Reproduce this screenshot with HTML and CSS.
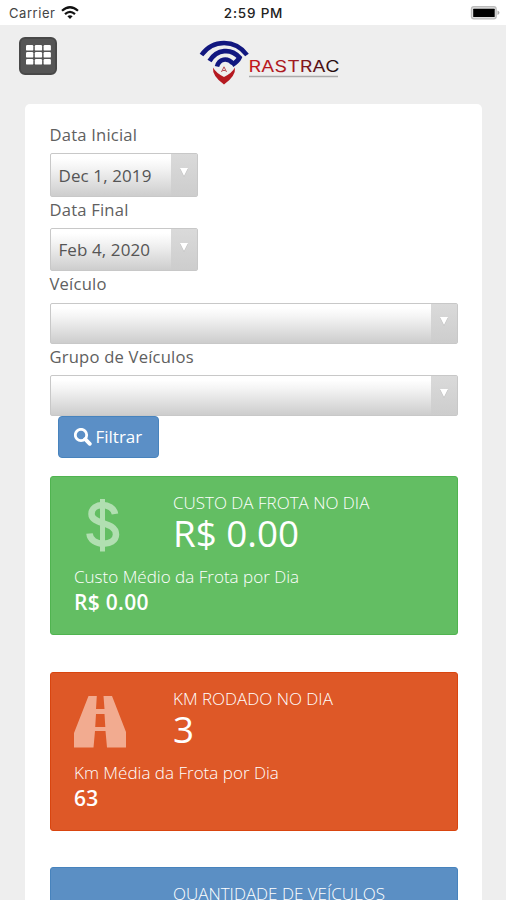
FILE: index.html
```html
<!DOCTYPE html>
<html lang="pt-BR">
<head>
<meta charset="utf-8">
<meta name="viewport" content="width=device-width, initial-scale=1">
<title>Rastrac</title>
<link rel="stylesheet" href="styles.css">
</head>
<body>
<div class="status">
  <div class="carrier"><span>Carrier</span>
    <svg width="18" height="13" viewBox="0 0 18 13" fill="none" stroke="#111" stroke-width="2.2"><path d="M1 4.8Q9-2.3 17 4.8M4 8.1Q9 3.5 14 8.1"/><path d="M6.4 10.3Q9 8.1 11.6 10.3L9 13Z" fill="#111" stroke="none"/></svg>
  </div>
  <time>2:59 PM</time>
  <svg class="battery" width="30" height="16" viewBox="0 0 30 16"><rect x=".8" y="1" width="26" height="13.5" rx="3" fill="#bbb"/><rect x="2" y="2.2" width="23.6" height="11.1" rx="2" fill="#ddd"/><rect x="3.2" y="3.7" width="21.5" height="8.2" rx=".5" fill="#000"/><path d="M27.5 5.5q4 2.2 0 4.5z" fill="#aaa"/></svg>
</div>
<header class="header">
  <button class="menu" aria-label="Menu">
    <svg width="25" height="20" viewBox="0 0 25 20" fill="#fff"><rect width="7.3" height="5.6" rx="1.2"/><rect x="8.8" width="7.3" height="5.6" rx="1.2"/><rect x="17.6" width="7.3" height="5.6" rx="1.2"/><rect y="7" width="7.3" height="5.6" rx="1.2"/><rect x="8.8" y="7" width="7.3" height="5.6" rx="1.2"/><rect x="17.6" y="7" width="7.3" height="5.6" rx="1.2"/><rect y="14" width="7.3" height="5.6" rx="1.2"/><rect x="8.8" y="14" width="7.3" height="5.6" rx="1.2"/><rect x="17.6" y="14" width="7.3" height="5.6" rx="1.2"/></svg>
  </button>
  <svg class="logo" width="144" height="48" viewBox="0 0 144 48">
    <defs><linearGradient id="word" x1="0" x2="1"><stop offset="0" stop-color="#c5161c"/><stop offset=".5" stop-color="#a31a20"/><stop offset="1" stop-color="#16090a"/></linearGradient></defs>
    <g fill="none" stroke="#11177f">
      <path d="M2.500 17C14 1 36 1 48 17" stroke-width="4.500"/>
      <path d="M10.500 23C18 11 32 10 40.500 19.500Q39 23 33 27" stroke-width="4.800"/>
      <path d="M18 28.500C20 21 28 19 34 25.500" stroke-width="4.500"/>
    </g>
    <path d="M14 29.500Q17 35 25 39Q33 35 36 29.500Q37 38 25 46.500Q13 38 14 29.500Z" fill="#b51920"/>
    <path d="M22.500 34L25 28.800L27.500 34M23.500 32.500H26.500" fill="none" stroke="#b84a50"/>
    <text class="wordmark" x="49.5" y="34" textLength="91" lengthAdjust="spacingAndGlyphs" fill="url(#word)">RASTRAC</text>
    <path d="M50 38.500H139" stroke="#aaa" stroke-width="1.3"/>
  </svg>
</header>
<main class="panel">
  <form class="filters">
    <label>Data Inicial</label>
    <div class="select date"><span>Dec 1, 2019</span><i class="arrow"></i></div>
    <label>Data Final</label>
    <div class="select date"><span>Feb 4, 2020</span><i class="arrow"></i></div>
    <label class="vehicle">Veículo</label>
    <div class="select"><span></span><i class="arrow"></i></div>
    <label>Grupo de Veículos</label>
    <div class="select"><span></span><i class="arrow"></i></div>
    <button type="button" class="submit"><svg width="18" height="18" viewBox="0 0 18 18" fill="none" stroke="#fff"><circle cx="7" cy="7" r="5.7" stroke-width="2.8"/><path d="M11.200 11.200L15.800 15.800" stroke-width="3.8" stroke-linecap="round"/></svg><span>Filtrar</span></button>
  </form>
  <section class="card green">
    <div class="top">
      <div class="icon"><svg class="dollar" width="54" height="56" viewBox="0 0 54 56" fill="none" stroke="#b1dfb1"><path d="M42 17C40 5 18.500 5 18.500 17C18.500 28 43 24 43 37.500C43 50 17.500 50 16.500 36.500" stroke-width="6.500"/><path d="M29.500 2V54.500" stroke-width="5"/></svg></div>
      <div><h2>CUSTO DA FROTA NO DIA</h2><div class="value">R$ 0.00</div></div>
    </div>
    <p>Custo Médio da Frota por Dia</p>
    <strong>R$ 0.00</strong>
  </section>
  <section class="card orange">
    <div class="top">
      <div class="icon"><svg width="54" height="52" viewBox="0 0 54 52"><path fill="#f2ab90" fill-rule="evenodd" d="M15.500 0H39L53 36V51.500H34L32.500 35H22L20.500 51.500H1V37ZM23.800 0L23 13H31.500L30.500 0ZM23 18L22.200 31H32.300L31.500 18Z"/></svg></div>
      <div><h2>KM RODADO NO DIA</h2><div class="value">3</div></div>
    </div>
    <p>Km Média da Frota por Dia</p>
    <strong>63</strong>
  </section>
  <section class="card blue">
    <div class="top">
      <div class="icon"></div>
      <div><h2>QUANTIDADE DE VEÍCULOS</h2></div>
    </div>
  </section>
</main>
</body>
</html>
```
FILE: styles.css
```css
* { box-sizing: border-box; }
body {
  margin: 0;
  height: 900px;
  overflow: hidden;
  background: #eee;
  font-family: "Open Sans", sans-serif;
  color: #606060;
}
.status {
  height: 25px;
  padding: 0 6px 0 9px;
  display: grid;
  grid-template-columns: 1fr auto 1fr;
  align-items: center;
  background: #fff;
  font-family: Inter, sans-serif;
  font-size: 13px;
  color: #444;
}
.carrier { display: flex; align-items: center; gap: 6px; letter-spacing: .55px; }
.status time { margin: 1px 2px 0 0; font-weight: 500; font-size: 13.5px; letter-spacing: .8px; color: #222; }
.battery { justify-self: end; }
.header {
  height: 79px;
  padding: 12px 19px 0;
  display: flex;
  align-items: flex-start;
}
.menu {
  width: 38px;
  height: 38px;
  padding: 0 0 3px;
  display: grid;
  place-items: center;
  border: 2px solid #484848;
  border-radius: 6px;
  background: #555;
}
.logo { margin: 1px 0 0 142px; }
.wordmark { font-family: Inter, sans-serif; font-size: 15.5px; }
.panel {
  margin: 0 24px 0 25px;
  padding: 18px 24px 0 24.5px;
  height: 796px;
  overflow: hidden;
  background: #fff;
  border-radius: 5px 5px 0 0;
}
.filters { display: flex; flex-direction: column; align-items: flex-start; }
label {
  height: 31px;
  font-size: 16.6px;
  line-height: 25px;
  letter-spacing: .2px;
}
.vehicle { height: 32px; }
.select {
  width: 100%;
  height: 41px;
  display: flex;
  align-items: center;
  justify-content: space-between;
  border: 1px solid #c8c8c8;
  border-radius: 2px;
  background: linear-gradient(#fff 10%, #f3f3f3 35%, #cdcdcd);
  font-size: 17px;
  color: #555;
}
.select.date { width: 148px; height: 43.5px; }
.select span { padding: 1px 0 0 8px; letter-spacing: .1px; white-space: nowrap; }
.arrow {
  width: 26px;
  height: 100%;
  display: flex;
  justify-content: center;
  align-items: center;
  padding-bottom: 5px;
  background: linear-gradient(#dadada, #cdcdcd);
}
.arrow::after {
  content: "";
  border: 4.5px solid transparent;
  border-top: 8px solid #fff;
  border-bottom: 0;
  filter: drop-shadow(0 1px 0 #bbb);
}
.submit {
  width: 101px;
  height: 42px;
  margin: 0 0 18px 8px;
  padding: 0 0 1px 15px;
  display: flex;
  align-items: center;
  gap: 4px;
  border: 1px solid #4783bd;
  border-radius: 4px;
  background: #5b8fc6;
  color: #fff;
  font: 17px "Open Sans", sans-serif;
}
.card {
  height: 159px;
  margin-bottom: 36.5px;
  padding: 14px 23.5px 0;
  border: 1px solid;
  border-radius: 3px;
  color: #fff;
}
.green { background: #63be63; border-color: #50b450; }
.orange { background: #de5827; border-color: #d9450f; }
.blue { background: #5b8fc4; border-color: #4783bd; }
.top { height: 74px; display: flex; }
.icon { width: 99px; flex: none; }
.icon svg { display: block; margin: 9px 0 0 -1.5px; }
.icon .dollar { margin-top: 6px; }
h2 {
  margin: 0;
  font-size: 17px;
  font-weight: 300;
  line-height: 24px;
  white-space: nowrap;
}
.value { font-size: 36.8px; line-height: 37px; }
.card p {
  margin: 0;
  font-size: 17.05px;
  font-weight: 300;
  line-height: 24px;
}
.card strong { display: block; font-size: 21px; font-weight: 600; line-height: 26px; letter-spacing: .3px; }
```
